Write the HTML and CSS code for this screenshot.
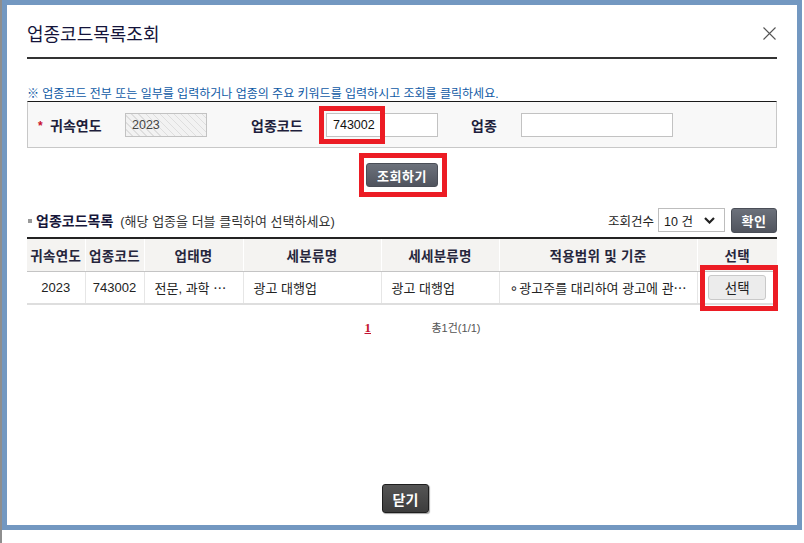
FILE: index.html
```html
<!DOCTYPE html>
<html lang="ko">
<head>
<meta charset="utf-8">
<title>업종코드목록조회</title>
<link rel="stylesheet" href="styles.css">
</head>
<body>
<div class="dialog">
  <div class="dlg-head">
    <h1 class="dlg-title">업종코드목록조회</h1>
    <svg class="close" width="13" height="13" viewBox="0 0 13 13"><path d="M0.5 0.5L12.5 12.5M12.5 0.5L0.5 12.5" stroke="#555" stroke-width="1.1" fill="none"/></svg>
  </div>

  <p class="info">※ 업종코드 전부 또는 일부를 입력하거나 업종의 주요 키워드를 입력하시고 조회를 클릭하세요.</p>

  <div class="search">
    <span class="star">*</span>
    <span class="lbl lbl-year">귀속연도</span>
    <span class="inp inp-year disabled">2023</span>
    <span class="lbl lbl-code">업종코드</span>
    <span class="hl-wrap">
      <span class="inp inp-code">743002</span>
      <span class="hl hl-code"></span>
    </span>
    <span class="lbl lbl-ind">업종</span>
    <span class="inp inp-ind"></span>
  </div>

  <div class="btn-row">
    <span class="hl-wrap">
      <button class="btn-dark btn-search">조회하기</button>
      <span class="hl hl-search"></span>
    </span>
  </div>

  <div class="toolbar">
    <div class="sec-title"><span class="bullet"></span><b>업종코드목록</b><span class="sub">(해당 업종을 더블 클릭하여 선택하세요)</span></div>
    <div class="tools">
      <span class="cnt-label">조회건수</span>
      <span class="select">10 건<svg width="11" height="7" viewBox="0 0 11 7"><path d="M1 1L5.5 5.5L10 1" stroke="#222" stroke-width="2.2" fill="none"/></svg></span>
      <button class="btn-dark btn-ok">확인</button>
    </div>
  </div>

  <table class="list">
    <colgroup>
      <col class="c1"><col class="c2"><col class="c3"><col class="c4"><col class="c5"><col class="c6"><col class="c7">
    </colgroup>
    <thead>
      <tr><th>귀속연도</th><th>업종코드</th><th>업태명</th><th>세분류명</th><th>세세분류명</th><th>적용범위 및 기준</th><th>선택</th></tr>
    </thead>
    <tbody>
      <tr>
        <td class="ctr">2023</td>
        <td class="ctr">743002</td>
        <td class="lft">전문, 과학 ⋯</td>
        <td class="lft">광고 대행업</td>
        <td class="lft">광고 대행업</td>
        <td class="lft"><span class="dot">∘</span>광고주를 대리하여 광고에 관⋯</td>
        <td class="ctr pick"><span class="hl-wrap"><button class="btn-light">선택</button><span class="hl hl-pick"></span></span></td>
      </tr>
    </tbody>
  </table>

  <div class="paging">
    <a class="page-num">1</a>
    <span class="total">총1건(1/1)</span>
  </div>

  <div class="foot">
    <button class="btn-close">닫기</button>
  </div>
</div>
</body>
</html>
```
FILE: styles.css
```css
* { box-sizing: border-box; }
html, body { margin: 0; height: 100%; }
body {
  background: linear-gradient(to right, #8e8e8e 0, #8e8e8e 2px, #fff 2px);
  font-family: "Liberation Sans", "Noto Sans CJK KR", sans-serif;
  color: #222;
}
.dialog {
  margin-left: 2px;
  width: 800px;
  height: 530px;
  border: 5px solid #7398c1;
  background: #fff;
  padding: 0 20px 12px;
  display: flex;
  flex-direction: column;
}
.dlg-head {
  height: 54px;
  padding-top: 21px;
  border-bottom: 2px solid #333;
  display: flex;
  justify-content: space-between;
  align-items: flex-start;
}
.dlg-title {
  margin: 0;
  font-size: 18px;
  line-height: 19px;
  font-weight: normal;
  color: #14143a;
}
.close { margin-top: 1px; margin-right: 1px; }

.info {
  margin: 28px 0 0;
  height: 14px;
  font-size: 12px;
  line-height: 14px;
  color: #0f5aa5;
  white-space: nowrap;
}

.search {
  height: 47px;
  border-top: 1px solid #1a1a1a;
  border-left: 1px solid #c8c8c8;
  border-right: 1px solid #c8c8c8;
  border-bottom: 1px solid #c8c8c8;
  background: #f8f8f8;
  display: flex;
  align-items: center;
  padding-left: 10px;
}
.star {
  width: 12px;
  color: #c8102e;
  font-weight: bold;
  font-size: 12px;
  line-height: 12px;
  padding-top: 2px;
}
.lbl {
  font-size: 14px;
  font-weight: bold;
  color: #1e1e3c;
}
.lbl-year { width: 75px; }
.lbl-code { width: 75px; margin-left: 44px; }
.lbl-ind { width: 50px; margin-left: 33px; }
.inp {
  display: block;
  height: 24px;
  border: 1px solid #c2c2c2;
  background: #fff;
  font-size: 12.5px;
  line-height: 22px;
  color: #111;
  padding-left: 6px;
}
.inp-year {
  width: 82px;
  color: #444;
  background: repeating-linear-gradient(45deg, #f2f2f2 0, #f2f2f2 4px, #dedede 4px, #dedede 5px);
}
.inp-code { width: 112px; }
.inp-ind { width: 152px; }

.hl-wrap { position: relative; display: inline-block; }
.hl {
  position: absolute;
  border: 5px solid #ec1c24;
  pointer-events: none;
}
.hl-code { left: -7px; top: -7px; width: 66px; height: 38px; }
.hl-search { left: -7px; top: -10px; width: 88px; height: 44px; }
.hl-pick { left: -8px; top: -10px; width: 78px; height: 46px; }

.btn-row {
  margin-top: 15px;
  display: flex;
  justify-content: center;
}
.btn-dark {
  display: block;
  margin: 0;
  border: 1px solid #4a4e57;
  border-radius: 3px;
  background: linear-gradient(#6c717b, #50545e);
  color: #fff;
  font-family: inherit;
  font-weight: bold;
  font-size: 13px;
  letter-spacing: 0.5px;
  padding: 0;
}
.btn-search { width: 72px; height: 24px; }

.toolbar {
  margin-top: 21px;
  height: 24px;
  display: flex;
  justify-content: space-between;
  align-items: center;
}
.sec-title {
  display: flex;
  align-items: center;
  white-space: nowrap;
}
.bullet {
  width: 4px;
  height: 4px;
  background: #999;
  margin: 1px 4px 0 1px;
}
.sec-title b {
  font-size: 14px;
  color: #16163a;
}
.sub { color: #333; font-size: 13px; margin-left: 7px; }
.tools { display: flex; align-items: center; }
.cnt-label { font-size: 12.5px; color: #222; margin-right: 4px; }
.select {
  width: 67px;
  height: 24px;
  border: 1px solid #bdbdbd;
  background: #fff;
  display: flex;
  align-items: center;
  justify-content: space-between;
  padding: 0 9px 0 5px;
  font-size: 12.5px;
  color: #1a1a1a;
}
.btn-ok { width: 46px; height: 25px; margin-left: 6px; }

.list {
  margin-top: 5px;
  width: 750px;
  table-layout: fixed;
  border-collapse: collapse;
  border-top: 2px solid #222;
}
.c1 { width: 58px; } .c2 { width: 59px; } .c3 { width: 99px; } .c4 { width: 138px; }
.c5 { width: 118px; } .c6 { width: 198px; } .c7 { width: 80px; }
.list th {
  height: 33px;
  padding: 0;
  background: #f4f3f1;
  border-left: 1px solid #fff;
  border-bottom: 1px solid #c4c4c4;
  font-size: 13.5px;
  font-weight: bold;
  color: #26263c;
  letter-spacing: 0.3px;
  white-space: nowrap;
}
.list th:first-child, .list td:first-child { border-left: none; }
.list td {
  height: 33px;
  padding: 0;
  border-left: 1px solid #e6e6e6;
  border-bottom: 2px solid #dedede;
  font-size: 13px;
  color: #222;
  white-space: nowrap;
  overflow: hidden;
}
.list td.ctr { text-align: center; }
.list td.lft { padding-left: 10px; }
.list td.pick { overflow: visible; }
.dot { font-family: "DejaVu Sans", sans-serif; font-size: 14px; margin-right: 1px; }
.btn-light {
  display: block;
  width: 58px;
  height: 25px;
  margin: 0;
  padding: 0;
  border: 1px solid #c9c9c9;
  border-radius: 3px;
  background: #ececec;
  font-family: inherit;
  font-size: 13.5px;
  color: #222;
}

.paging {
  margin-top: 15px;
  display: flex;
  justify-content: center;
  align-items: center;
  gap: 61px;
  padding-left: 41px;
  line-height: 16px;
}
.page-num {
  font-family: "Liberation Serif", serif;
  font-weight: bold;
  font-size: 13px;
  color: #c4122f;
  text-decoration: underline;
  width: 6px;
}
.total { font-size: 11px; color: #555; }

.foot {
  margin-top: auto;
  display: flex;
  justify-content: center;
  padding-left: 7px;
}
.btn-close {
  width: 47px;
  height: 29px;
  margin: 0;
  padding: 0;
  border: 1px solid #1e1e1e;
  border-radius: 3px;
  background: linear-gradient(#555, #3c3c3c);
  box-shadow: 1px 1px 1px rgba(0,0,0,0.35);
  color: #fff;
  font-family: inherit;
  font-weight: bold;
  font-size: 14px;
}
```
